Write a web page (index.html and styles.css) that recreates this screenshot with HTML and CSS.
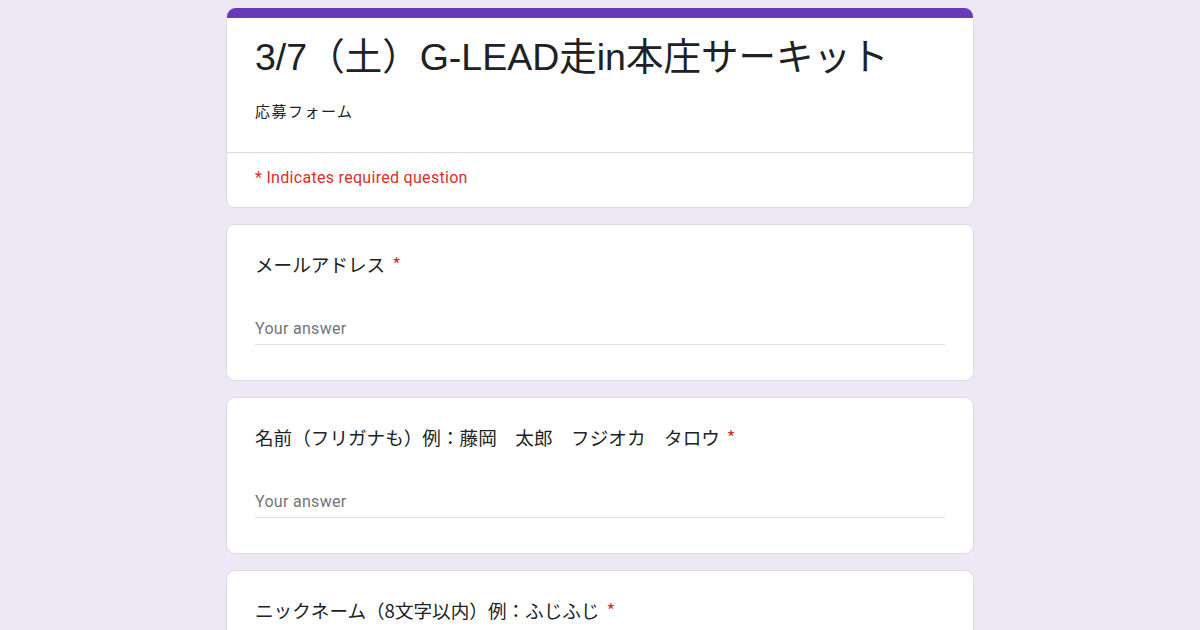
FILE: index.html
```html
<!DOCTYPE html>
<html lang="ja">
<head>
<meta charset="utf-8">
<title>3/7（土）G-LEAD走in本庄サーキット</title>
<link rel="stylesheet" href="styles.css">
</head>
<body>
<main class="form">
  <section class="card header-card">
    <div class="accent"></div>
    <div class="header-main">
      <h1 class="title">3/7（土）G-LEAD走in本庄サーキット</h1>
      <p class="subtitle">応募フォーム</p>
    </div>
    <div class="header-note">* Indicates required question</div>
  </section>

  <section class="card question">
    <div class="q-label">メールアドレス<span class="req">*</span></div>
    <div class="answer">Your answer</div>
  </section>

  <section class="card question">
    <div class="q-label">名前（フリガナも）例：藤岡　太郎　フジオカ　タロウ<span class="req">*</span></div>
    <div class="answer">Your answer</div>
  </section>

  <section class="card question">
    <div class="q-label">ニックネーム（8文字以内）例：ふじふじ<span class="req">*</span></div>
    <div class="answer">Your answer</div>
  </section>
</main>
</body>
</html>
```

FILE: styles.css
```css
* { box-sizing: border-box; }
html, body { margin: 0; padding: 0; }
body {
  background: #ede7f6;
  font-family: Roboto, "Noto Sans CJK JP", sans-serif;
  color: #202124;
  height: 630px;
  overflow: hidden;
}
.form {
  width: 748px;
  margin: 8px auto 0;
  display: flex;
  flex-direction: column;
  gap: 16px;
}
.card {
  background: #fff;
  border: 1px solid #dadce0;
  border-radius: 9px;
  overflow: hidden;
}
.header-card {
  border-top: none;
}
.accent {
  height: 10px;
  background: #673ab7;
}
.header-main {
  padding: 15px 28px 29px;
  border-bottom: 1px solid #dadce0;
}
.title {
  margin: 0;
  font-family: "Liberation Sans", Arial, "Noto Sans CJK JP", sans-serif;
  font-weight: 400;
  font-size: 37.5px;
  line-height: 48px;
  color: #202124;
}
.subtitle {
  margin: 18px 0 0;
  font-family: "Noto Sans CJK JP", sans-serif;
  font-size: 15px;
  line-height: 24px;
  letter-spacing: 1.5px;
  color: #202124;
}
.header-note {
  padding: 13px 28px 17px;
  font-family: Roboto, sans-serif;
  font-size: 16px;
  line-height: 24px;
  color: #d93025;
  letter-spacing: 0.3px;
}
.question {
  padding: 27px 28px 35px;
}
.q-label {
  font-family: "Noto Sans CJK JP", sans-serif;
  font-size: 18.6px;
  line-height: 24px;
  color: #202124;
}
.req {
  color: #d93025;
  margin-left: 7px;
}
.answer {
  margin-top: 41px;
  padding-bottom: 3px;
  border-bottom: 1px solid #e0e0e0;
  font-family: Roboto, sans-serif;
  font-size: 16px;
  line-height: 24px;
  color: #70757a;
  letter-spacing: 0.3px;
}
```
